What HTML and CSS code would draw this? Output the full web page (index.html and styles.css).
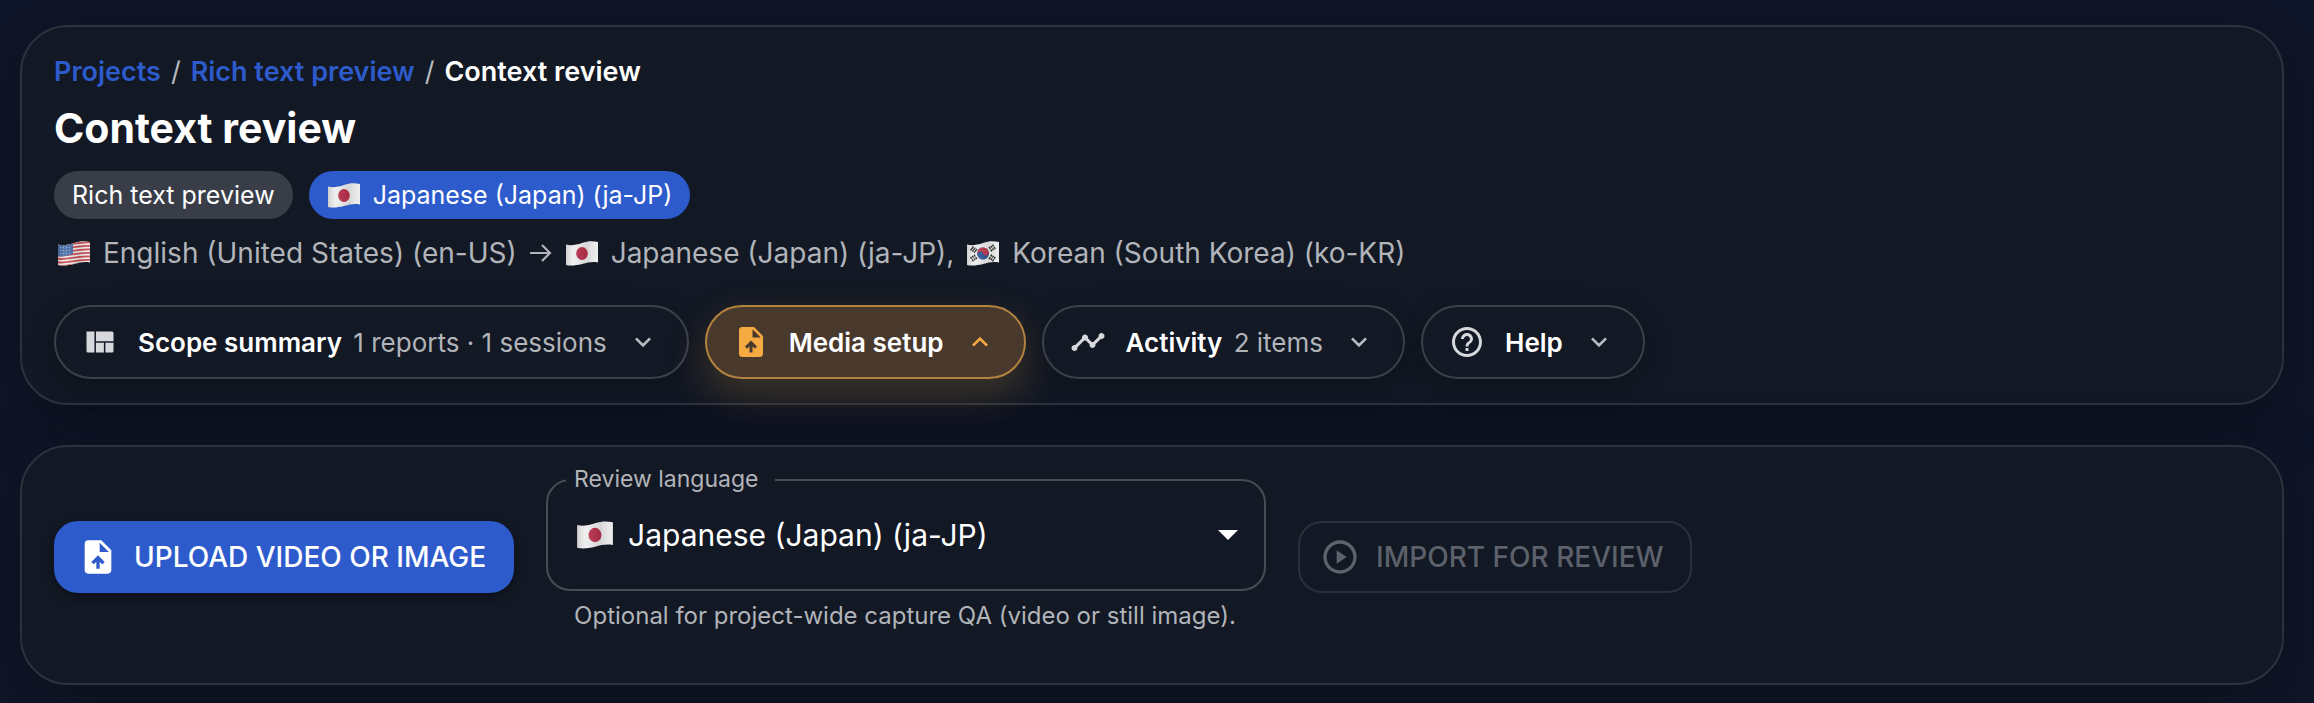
FILE: index.html
```html
<!DOCTYPE html>
<html lang="en">
<head>
  <meta charset="UTF-8" />
  <meta name="viewport" content="width=device-width, initial-scale=1" />
  <title>Context review</title>
  <link rel="stylesheet" href="styles.css">
</head>
<body>
  <!-- shared flags and icons -->
  <svg class="defs" width="0" height="0" aria-hidden="true">
    <defs>
      <linearGradient id="flagShade" x1="0" y1="0" x2="1" y2="0">
        <stop offset="0" stop-color="#000" stop-opacity="0.16" />
        <stop offset="0.25" stop-color="#fff" stop-opacity="0.1" />
        <stop offset="0.65" stop-color="#000" stop-opacity="0.1" />
        <stop offset="1" stop-color="#fff" stop-opacity="0.05" />
      </linearGradient>
      <clipPath id="flagWave">
        <path d="M1 3.5C6 5 11 4 17 2S27 0 33 1V21.5C27 20.5 23 21.5 17 23S6 25 1 24Z" />
      </clipPath>
    </defs>
    <symbol id="flag-jp" viewBox="0 0 34 25">
      <g clip-path="url(#flagWave)">
        <rect width="34" height="25" fill="#eeeeee" />
        <ellipse cx="17" cy="12.5" rx="5.8" ry="6.4" fill="#b92f4b" />
        <rect width="34" height="25" fill="url(#flagShade)" />
      </g>
    </symbol>
    <symbol id="flag-us" viewBox="0 0 34 25">
      <g clip-path="url(#flagWave)">
        <rect width="34" height="25" fill="#eeeeee" />
        <path d="M0 3.5C9 6 20 0 34 1.5M0 7C9 9.5 20 3.5 34 5M0 10.5C9 13 20 7 34 8.5M0 14C9 16.5 20 10.5 34 12M0 17.5C9 20 20 14 34 15.5M0 21C9 23.5 20 17.5 34 19M0 24.5C9 27 20 21 34 22.5" fill="none" stroke="#cc4a50" stroke-width="1.8" />
        <path d="M0 3C6 5 10 4 16 1.5V13C10 15 6 16 0 15Z" fill="#4a6ea8" />
        <path d="M3 6.5H15M3 9.5H15M3 12.5H15" stroke="#9fb3d2" stroke-width="1" stroke-dasharray="1 2" />
        <rect width="34" height="25" fill="url(#flagShade)" />
      </g>
    </symbol>
    <symbol id="flag-kr" viewBox="0 0 34 25">
      <g clip-path="url(#flagWave)">
        <rect width="34" height="25" fill="#eeeeee" />
        <g transform="rotate(-20 17 12.5)">
          <circle cx="17" cy="12.5" r="6" fill="#2f5a9c" />
          <path d="M11 12.5a6 6 0 0 1 12 0a3 3 0 0 1-6 0a3 3 0 0 0-6 0z" fill="#c23a50" />
        </g>
        <g stroke="#2b2b2b" stroke-width="1.4" fill="none">
          <path d="M4.5 9.5L7.5 5.5M6.3 10.7L9.3 6.7M8 11.9L11 7.9" />
          <path d="M4.5 16L7.5 20.5M6.3 14.8L9.3 19.3M8 13.6L11 18.1" stroke-dasharray="2.3 0.7" />
          <path d="M23 6L26 10.5M24.7 4.8L27.7 9.3M26.4 3.6L29.4 8.1" stroke-dasharray="2.3 0.7" />
          <path d="M23 18L26 13.5M24.7 19.2L27.7 14.7M26.4 20.4L29.4 15.9" stroke-dasharray="2.3 0.7" />
        </g>
        <rect width="34" height="25" fill="url(#flagShade)" />
      </g>
    </symbol>
    <symbol id="icon-upload-file" viewBox="0 0 24 24">
      <path fill="currentColor" fill-rule="evenodd" d="M14 2H6c-1.1 0-1.99.9-1.99 2L4 20c0 1.1.89 2 1.99 2H18c1.1 0 2-.9 2-2V8l-6-6zm4.5 7H13V3.5zM8 15.01l1.41 1.41L11 14.84V19h2v-4.16l1.59 1.59L16 15.01 12.01 11z" />
    </symbol>
    <symbol id="icon-more" viewBox="0 0 24 24">
      <path fill="currentColor" d="M16.59 8.59 12 13.17 7.41 8.59 6 10l6 6 6-6z" />
    </symbol>
  </svg>

  <main class="page">
    <header class="card hero">
      <nav class="breadcrumb" aria-label="Breadcrumb">
        <a href="#">Projects</a>
        <span class="sep">/</span>
        <a href="#">Rich text preview</a>
        <span class="sep">/</span>
        <span class="current">Context review</span>
      </nav>

      <h1>Context review</h1>

      <div class="chips">
        <span class="chip">Rich text preview</span>
        <span class="chip primary">
          <svg class="flag"><use href="#flag-jp" /></svg>
          Japanese (Japan) (ja-JP)
        </span>
      </div>

      <p class="locales">
        <svg class="flag"><use href="#flag-us" /></svg>
        <span>English (United States) (en-US)</span>
        <svg class="arrow" viewBox="0 0 24 24" fill="none" stroke="currentColor" stroke-width="2.2"><path d="M1 12H21M13 4l8 8-8 8" /></svg>
        <svg class="flag"><use href="#flag-jp" /></svg>
        <span>Japanese (Japan) (ja-JP),</span>
        <svg class="flag"><use href="#flag-kr" /></svg>
        <span>Korean (South Korea) (ko-KR)</span>
      </p>

      <div class="toggles">
        <button type="button" class="toggle" aria-expanded="false">
          <svg class="icon" viewBox="0 0 24 24"><path fill="currentColor" d="M3 5h5.3v14H4a1 1 0 0 1-1-1zM9.3 5H20a1 1 0 0 1 1 1v5.5H9.3zM9.3 12.5h5.3V19H9.3zM15.6 12.5H21V18a1 1 0 0 1-1 1h-4.4z" /></svg>
          <span class="toggle-text"><strong>Scope summary</strong> <span>1 reports · 1 sessions</span></span>
          <svg class="chevron"><use href="#icon-more" /></svg>
        </button>
        <button type="button" class="toggle active" aria-expanded="true">
          <svg class="icon"><use href="#icon-upload-file" /></svg>
          <span class="toggle-text"><strong>Media setup</strong></span>
          <svg class="chevron"><use href="#icon-more" /></svg>
        </button>
        <button type="button" class="toggle" aria-expanded="false">
          <svg class="icon" viewBox="0 0 24 24"><path fill="currentColor" d="M23 8c0 1.1-.9 2-2 2-.18 0-.35-.02-.51-.07l-3.56 3.55c.05.16.07.34.07.52 0 1.1-.9 2-2 2s-2-.9-2-2c0-.18.02-.36.07-.52l-2.55-2.55c-.16.05-.34.07-.52.07s-.36-.02-.52-.07l-4.55 4.56c.05.16.07.33.07.51 0 1.1-.9 2-2 2s-2-.9-2-2 .9-2 2-2c.18 0 .35.02.51.07l4.56-4.55C8.02 9.36 8 9.18 8 9c0-1.1.9-2 2-2s2 .9 2 2c0 .18-.02.36-.07.52l2.55 2.55c.16-.05.34-.07.52-.07s.36.02.52.07l3.55-3.56C19.02 8.35 19 8.18 19 8c0-1.1.9-2 2-2s2 .9 2 2z" /></svg>
          <span class="toggle-text"><strong>Activity</strong> <span>2 items</span></span>
          <svg class="chevron"><use href="#icon-more" /></svg>
        </button>
        <button type="button" class="toggle" aria-expanded="false">
          <svg class="icon" viewBox="0 0 24 24"><path fill="currentColor" d="M11 18h2v-2h-2zm1-16C6.48 2 2 6.48 2 12s4.48 10 10 10 10-4.48 10-10S17.52 2 12 2zm0 18c-4.41 0-8-3.59-8-8s3.59-8 8-8 8 3.59 8 8-3.59 8-8 8zm0-14c-2.21 0-4 1.79-4 4h2c0-1.1.9-2 2-2s2 .9 2 2c0 2-3 1.75-3 5h2c0-2.25 3-2.5 3-5 0-2.21-1.79-4-4-4z" /></svg>
          <span class="toggle-text"><strong>Help</strong></span>
          <svg class="chevron"><use href="#icon-more" /></svg>
        </button>
      </div>
    </header>

    <section class="card media">
      <button type="button" class="btn btn-primary">
        <svg class="btn-icon"><use href="#icon-upload-file" /></svg>
        Upload video or image
      </button>

      <div class="field">
        <div class="select-wrap">
          <label for="reviewLanguage">Review language</label>
          <svg class="flag select-flag"><use href="#flag-jp" /></svg>
          <select id="reviewLanguage" aria-describedby="languageHelp">
            <option>Japanese (Japan) (ja-JP)</option>
            <option>Korean (South Korea) (ko-KR)</option>
          </select>
          <svg class="caret" viewBox="0 0 20 10"><path d="M0 0h20L10 10z" fill="currentColor" /></svg>
        </div>
        <p class="help" id="languageHelp">Optional for project-wide capture QA (video or still image).</p>
      </div>

      <button type="button" class="btn btn-outline" disabled>
        <svg class="btn-icon" viewBox="0 0 24 24"><path fill="currentColor" d="M12 2C6.48 2 2 6.48 2 12s4.48 10 10 10 10-4.48 10-10S17.52 2 12 2zm0 18c-4.41 0-8-3.59-8-8s3.59-8 8-8 8 3.59 8 8-3.59 8-8 8zM10 8v8l6-4z" /></svg>
        Import for review
      </button>
    </section>
  </main>
</body>
</html>
```

FILE: styles.css
```css
* {
  box-sizing: border-box;
}

body {
  margin: 0;
  min-height: 100vh;
  background: #101629;
  color: #fff;
  font-family: Inter, "Liberation Sans", sans-serif;
  font-size: 26px;
}

.defs {
  position: absolute;
}

.page {
  display: flex;
  flex-direction: column;
  gap: 40px;
  padding: 25px 30px 18px 20px;
}

.card {
  border: 2px solid #2d323e;
  border-radius: 48px;
  background: #121824;
  box-shadow: 0 16px 56px rgba(8, 12, 16, 0.5);
}

.hero {
  padding: 27px 32px 24px;
}

.breadcrumb {
  display: flex;
  flex-wrap: wrap;
  gap: 10px;
  font-size: 27px;
  line-height: 36px;
  font-weight: 600;
}

.breadcrumb a {
  color: #2d5bcc;
  text-decoration: none;
}

.breadcrumb .sep {
  color: #b8babe;
  font-weight: 400;
}

h1 {
  margin: 12px 0 17px;
  font-size: 41px;
  line-height: 52px;
  font-weight: 700;
}

.chips {
  display: flex;
  flex-wrap: wrap;
  gap: 16px;
  font-size: 25px;
}

.chip {
  display: flex;
  align-items: center;
  gap: 12px;
  height: 48px;
  padding: 0 18px;
  border-radius: 24px;
  background: #393d48;
}

.chip.primary {
  background: #2d5bcc;
}

.flag {
  flex: none;
  width: 34px;
  height: 25px;
}

.locales {
  display: flex;
  flex-wrap: wrap;
  align-items: center;
  gap: 12px;
  margin: 14px 0 0;
  padding-left: 3px;
  color: #b1b4b9;
  font-size: 28px;
  line-height: 40px;
}

.arrow {
  width: 24px;
  height: 24px;
}

.toggles {
  display: flex;
  flex-wrap: wrap;
  gap: 16px;
  margin-top: 32px;
}

.toggle {
  display: flex;
  align-items: center;
  gap: 20px;
  height: 74px;
  padding: 0 28px 0 26px;
  border: 2px solid #3b404b;
  border-radius: 37px;
  background: #121824;
  box-shadow: 0 8px 24px rgba(0, 0, 0, 0.25);
  color: #fff;
  font: inherit;
  cursor: pointer;
}

.toggle strong {
  font-weight: 600;
}

.toggle-text span {
  margin-left: 4px;
  color: #b1b4b9;
}

.icon {
  width: 36px;
  height: 36px;
  color: #d6d8dc;
}

.chevron {
  width: 32px;
  height: 32px;
  color: #b8bbc0;
}

.toggle.active {
  border-color: #b48340;
  background: #49392d;
  box-shadow: 0 16px 40px rgba(245, 170, 66, 0.2);
}

.toggle.active .icon,
.toggle.active .chevron {
  color: #f5aa42;
}

.toggle.active .chevron {
  transform: rotate(180deg);
}

.media {
  display: flex;
  flex-wrap: wrap;
  align-items: center;
  gap: 32px;
  padding: 32px 32px 48px;
}

.btn {
  display: flex;
  align-items: center;
  gap: 16px;
  height: 72px;
  padding: 0 28px 0 24px;
  border: 0;
  border-radius: 24px;
  font: inherit;
  font-size: 28px;
  font-weight: 500;
  text-transform: uppercase;
  cursor: pointer;
}

.btn-icon {
  width: 40px;
  height: 40px;
}

.btn-primary {
  background: #2d5bcc;
  box-shadow: 0 4px 8px rgba(0, 0, 0, 0.35);
  color: #fff;
}

.btn-outline {
  padding: 0 26px 0 20px;
  border: 2px solid #2b303c;
  background: transparent;
  color: #5c616b;
  cursor: default;
}

.field {
  width: 720px;
  max-width: 100%;
}

.select-wrap {
  position: relative;
}

.select-wrap label {
  position: absolute;
  top: -16px;
  left: 20px;
  padding: 0 16px 0 8px;
  background: #121824;
  color: #b1b4b9;
  font-size: 23px;
  line-height: 32px;
}

.select-wrap select {
  display: block;
  width: 100%;
  height: 112px;
  padding: 0 64px 0 80px;
  border: 2px solid #484c56;
  border-radius: 24px;
  background: transparent;
  color: #fff;
  font: inherit;
  font-size: 30px;
  appearance: none;
}

.select-flag {
  position: absolute;
  top: 42px;
  left: 30px;
  width: 38px;
  height: 28px;
}

.caret {
  position: absolute;
  top: 51px;
  right: 28px;
  width: 20px;
  height: 10px;
  pointer-events: none;
}

.help {
  margin: 6px 0 0;
  padding-left: 28px;
  color: #b1b4b9;
  font-size: 24px;
  line-height: 38px;
}
```
